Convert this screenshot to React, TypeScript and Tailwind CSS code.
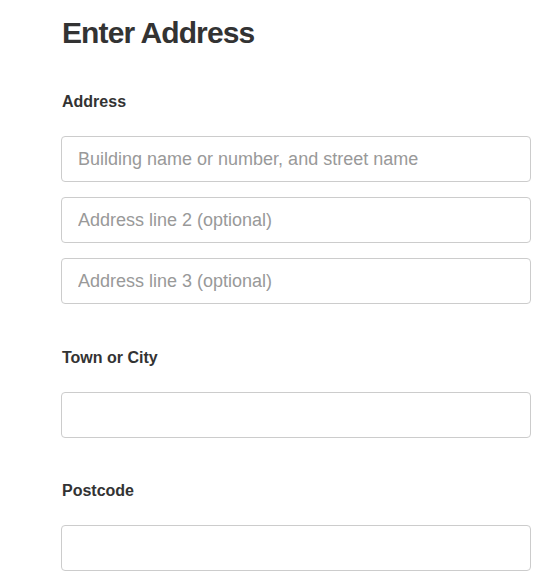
import React from "react";

const font = { fontFamily: '"Liberation Sans", Arial, sans-serif' };

function Field({ placeholder, className = "" }: { placeholder?: string; className?: string }) {
  return (
    <input
      type="text"
      placeholder={placeholder}
      className={`block w-[470px] h-[46px] rounded-[4px] border border-[#cccccc] bg-white px-[16px] text-[18px] text-[#333333] placeholder:text-[#999999] outline-none ${className}`}
      style={font}
    />
  );
}

export default function App() {
  return (
    <div className="min-h-[578px] w-[552px] bg-white pl-[61px] text-[#333333]" style={font}>
      <h1 className="pt-[15px] text-[30px] leading-[36px] font-bold tracking-[-0.9px] ml-[1px]">Enter Address</h1>

      <label className="mt-[41px] block text-[16px] leading-[20px] font-bold ml-[1px]">Address</label>
      <div className="mt-[24px] flex flex-col gap-[15px]">
        <Field placeholder="Building name or number, and street name" />
        <Field placeholder="Address line 2 (optional)" />
        <Field placeholder="Address line 3 (optional)" />
      </div>

      <label className="mt-[44px] block text-[16px] leading-[20px] font-bold ml-[1px]">Town or City</label>
      <Field className="mt-[24px]" />

      <label className="mt-[43px] block text-[16px] leading-[20px] font-bold ml-[1px]">Postcode</label>
      <Field className="mt-[24px]" />
    </div>
  );
}
